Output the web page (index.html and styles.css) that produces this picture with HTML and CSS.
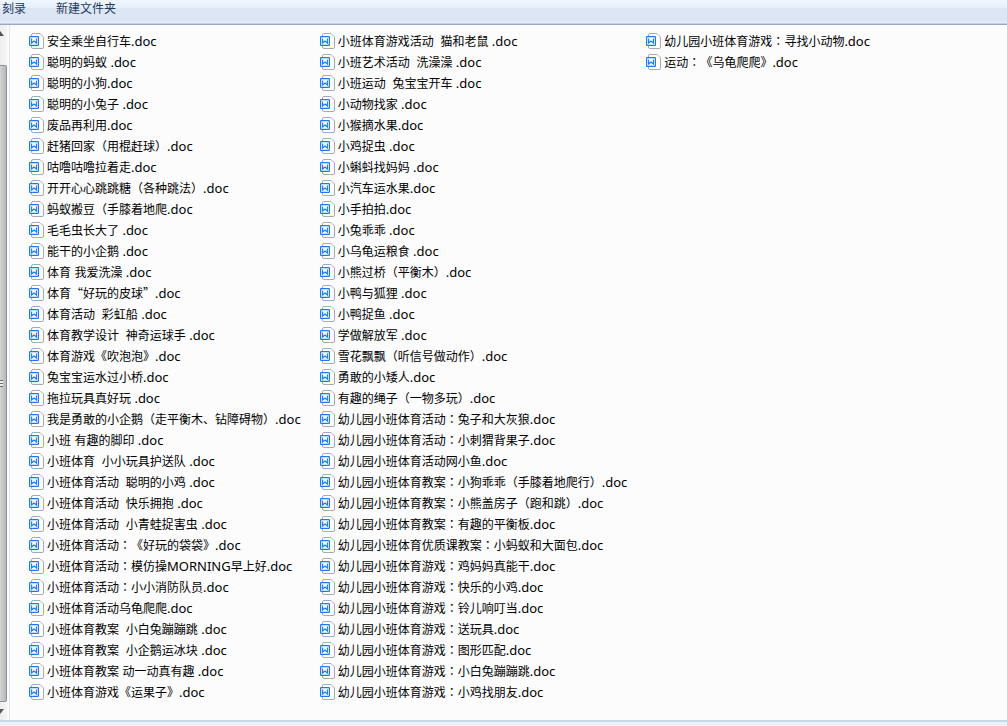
FILE: index.html
```
<!DOCTYPE html>
<html lang="zh-CN">
<head>
<meta charset="utf-8">
<title>新建文件夹</title>
<link rel="stylesheet" href="styles.css">
</head>
<body>
<svg class="defs" aria-hidden="true">
  <symbol id="doc" viewBox="0 0 15 16">
    <path d="M2.5 3 V2 Q2.5 .5 4 .5 H11 L14.5 4 V14 Q14.5 15.5 13 15.5 H4 Q2.5 15.5 2.5 14 V13" fill="#fff" stroke="#a3abb8"/>
    <rect x=".6" y="3.6" width="8.8" height="8.8" rx=".6" fill="#fff" stroke="#1a78f5" stroke-width="1.2"/>
    <path d="M2.6 5.5 V10 L5 8 L7.4 10 V5.5" fill="none" stroke="#1a78f5" stroke-width="1.1"/>
  </symbol>
</svg>
<header class="toolbar">
  <button type="button">刻录</button>
  <button type="button">新建文件夹</button>
</header>
<div class="body">
  <div class="scrollbar" aria-hidden="true">
    <svg class="arrow" viewBox="0 0 7 5"><path d="M0 0 L4 5 H0 Z" fill="#555"/></svg>
    <div class="thumb"><span class="grip"></span></div>
    <svg class="arrow" viewBox="0 0 7 5"><path d="M0 0 H4 L0 5 Z" fill="#555"/></svg>
  </div>
  <main class="pane">
    <ul class="files" id="files"></ul>
  </main>
</div>
<footer class="status"></footer>
<script src="files.js"></script>
</body>
</html>
```
FILE: files.js
```
const names = `安全乘坐自行车
聪明的蚂蚁 
聪明的小狗
聪明的小兔子 
废品再利用
赶猪回家（用棍赶球）
咕噜咕噜拉着走
开开心心跳跳糖（各种跳法）
蚂蚁搬豆（手膝着地爬
毛毛虫长大了 
能干的小企鹅 
体育 我爱洗澡 
体育“好玩的皮球”
体育活动  彩虹船 
体育教学设计  神奇运球手 
体育游戏《吹泡泡》
兔宝宝运水过小桥
拖拉玩具真好玩 
我是勇敢的小企鹅（走平衡木、钻障碍物）
小班 有趣的脚印 
小班体育  小小玩具护送队 
小班体育活动  聪明的小鸡 
小班体育活动  快乐拥抱 
小班体育活动  小青蛙捉害虫 
小班体育活动：《好玩的袋袋》
小班体育活动：模仿操MORNING早上好
小班体育活动：小小消防队员
小班体育活动乌龟爬爬
小班体育教案  小白兔蹦蹦跳 
小班体育教案  小企鹅运冰块 
小班体育教案 动一动真有趣 
小班体育游戏《运果子》
小班体育游戏活动  猫和老鼠 
小班艺术活动  洗澡澡 
小班运动  兔宝宝开车 
小动物找家 
小猴摘水果
小鸡捉虫 
小蝌蚪找妈妈 
小汽车运水果
小手拍拍
小兔乖乖 
小乌龟运粮食 
小熊过桥（平衡木）
小鸭与狐狸 
小鸭捉鱼 
学做解放军 
雪花飘飘（听信号做动作）
勇敢的小矮人
有趣的绳子（一物多玩）
幼儿园小班体育活动：兔子和大灰狼
幼儿园小班体育活动：小刺猬背果子
幼儿园小班体育活动网小鱼
幼儿园小班体育教案：小狗乖乖（手膝着地爬行）
幼儿园小班体育教案：小熊盖房子（跑和跳）
幼儿园小班体育教案：有趣的平衡板
幼儿园小班体育优质课教案：小蚂蚁和大面包
幼儿园小班体育游戏：鸡妈妈真能干
幼儿园小班体育游戏：快乐的小鸡
幼儿园小班体育游戏：铃儿响叮当
幼儿园小班体育游戏：送玩具
幼儿园小班体育游戏：图形匹配
幼儿园小班体育游戏：小白兔蹦蹦跳
幼儿园小班体育游戏：小鸡找朋友
幼儿园小班体育游戏：寻找小动物
运动：《乌龟爬爬》`.split("\n");

// Latin runs and centred punctuation each get their own face.
const markup = name => (name + ".doc")
  .replace(/[\x20-\x7e]+|[：（）]/g, run =>
    /[：（）]/.test(run)
      ? `<span class="mark" lang="zh-Hant">${run}</span>`
      : `<span class="latin">${run}</span>`);

document.getElementById("files").innerHTML = names.map(name =>
  `<li class="file"><svg class="icon" aria-hidden="true"><use href="#doc"/></svg><span class="name">${markup(name)}</span></li>`
).join("");
```
FILE: styles.css
```
* { box-sizing: border-box; }

body {
  margin: 0;
  min-height: 100vh;
  display: flex;
  flex-direction: column;
  background: #fcfcfc;
  color: #000;
  font: 12px/21px "Noto Sans CJK SC", sans-serif;
  text-spacing-trim: space-all;
}

.defs { position: absolute; width: 0; height: 0; }

.toolbar {
  display: flex;
  gap: 30px;
  height: 25px;
  padding: 0 2px 9px;
  background: linear-gradient(#eff6ff 0, #e5effa 8px, #dce6f4 8px, #dce6f4 21px, #e8f0fa 23px, #c5d0e4 23px, #c5d0e4 24px, #9aa8c8 24px);
}

.toolbar button {
  border: 0;
  padding: 0;
  background: none;
  color: #1e395b;
  font: 12px/16px "Noto Sans CJK SC", sans-serif;
}

.body { flex: 1; display: flex; }

.scrollbar {
  width: 10px;
  display: flex;
  flex-direction: column;
  padding: 6px 0;
  border-right: 1px solid #dbe6f4;
  background: linear-gradient(90deg, #ededed, #f5f5f5 7px, #fcfcfc 7px);
}

.arrow { width: 7px; height: 5px; }

.thumb {
  flex: 1;
  width: 7px;
  margin: 29px 0 7px;
  display: flex;
  align-items: center;
  border: 1px solid #8e8f94;
  border-left: 0;
  border-radius: 0 2px 2px 0;
  background: linear-gradient(90deg, #d4d4d6, #b6b7bb);
}

.grip {
  width: 3px;
  height: 7px;
  background: repeating-linear-gradient(#6b6c70 0, #6b6c70 1px, #eee 1px, #eee 3px);
}

.pane { flex: 1; padding: 5px 0 17px 19px; }

.files {
  list-style: none;
  margin: 0;
  padding: 0;
  display: grid;
  grid-template-rows: repeat(32, 21px);
  grid-auto-flow: column;
  grid-auto-columns: max-content;
  column-gap: 19px;
}

.file { display: flex; align-items: center; gap: 3px; }
.icon { flex: none; width: 15px; height: 16px; }
.name { white-space: pre; line-height: 20px; }
.latin { font-family: "Noto Sans", sans-serif; font-size: 13px; line-height: 1; }
.mark { font-family: "Noto Sans CJK TC", sans-serif; line-height: 1; }

.status {
  height: 6px;
  border-top: 2px solid #c9d7ea;
  background: #edf2fa;
}
```
